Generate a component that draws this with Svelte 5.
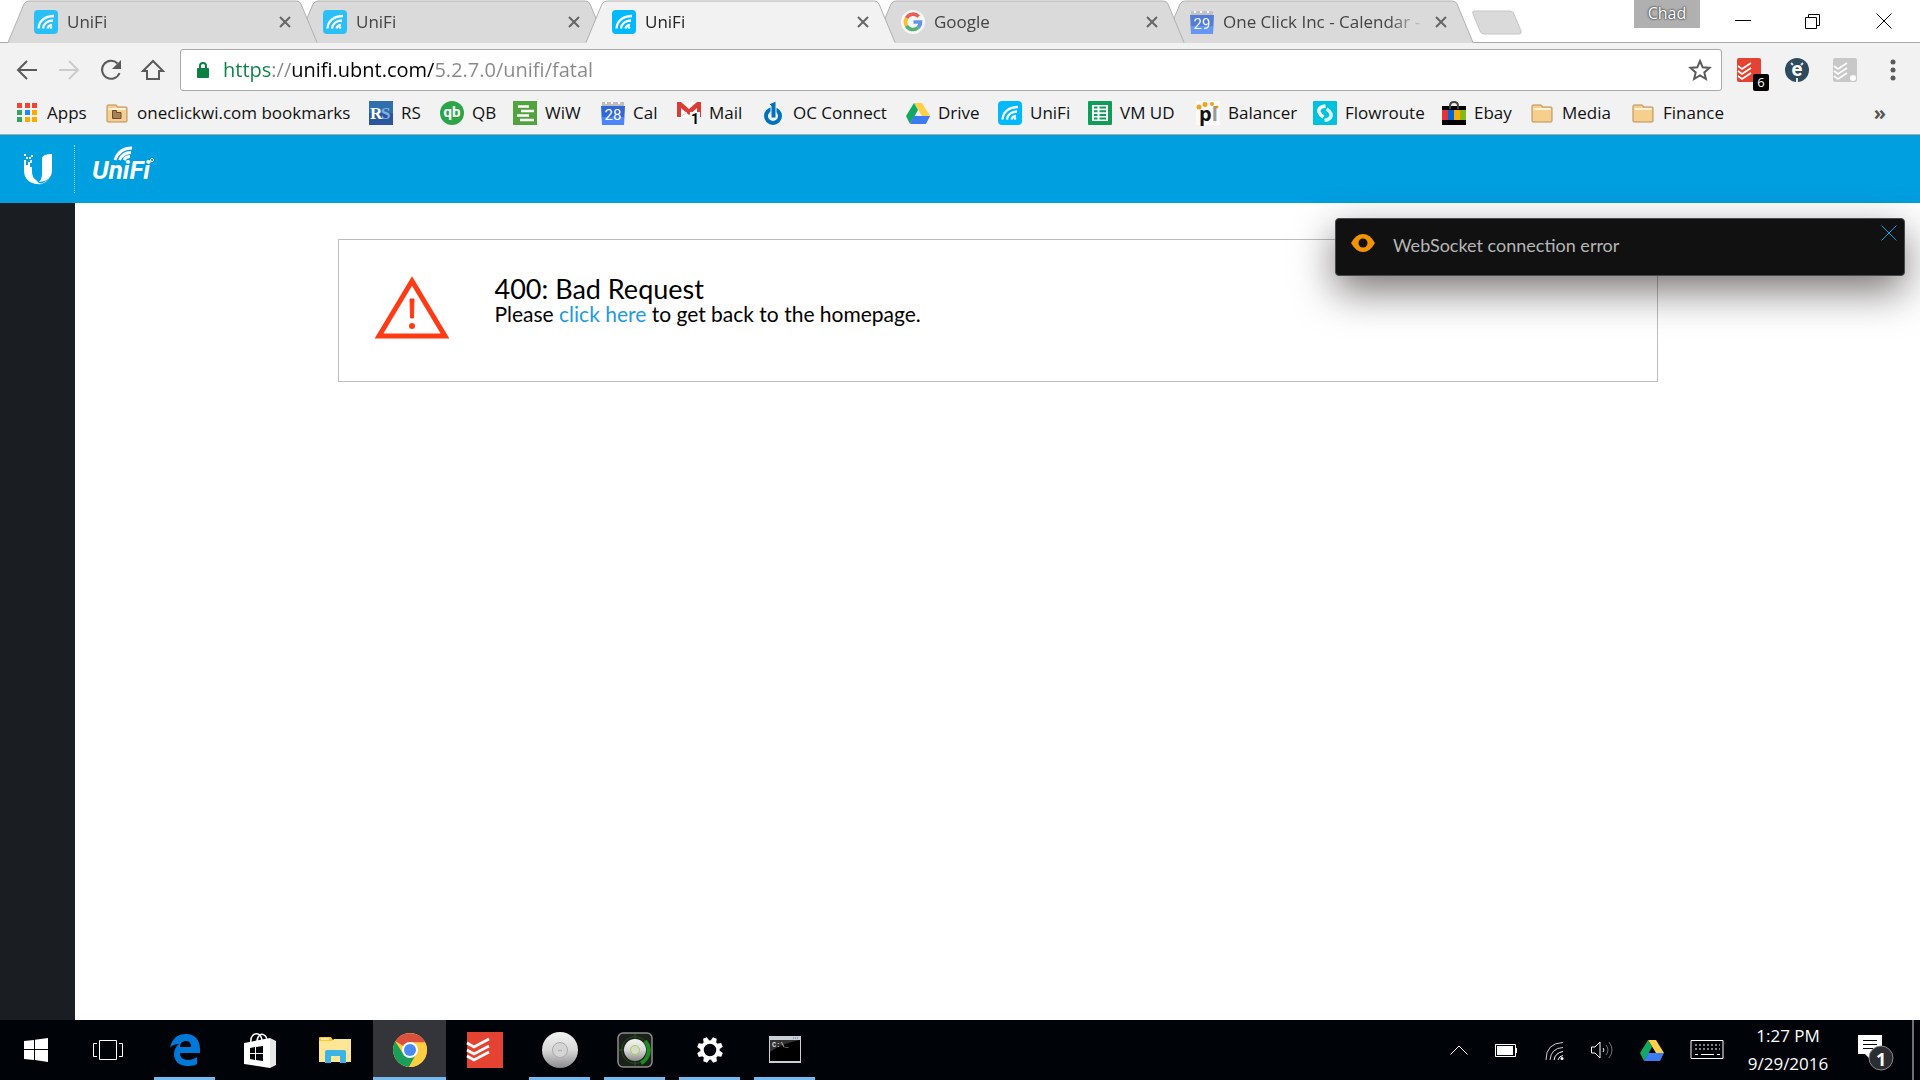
<script>
  const tabs = [
    { title: "UniFi", icon: "unifi" },
    { title: "UniFi", icon: "unifi" },
    { title: "UniFi", icon: "unifi", active: true },
    { title: "Google", icon: "google" },
    { title: "One Click Inc - Calendar -", icon: "cal29" },
  ]

  // width is the room each entry takes on the bar
  const bookmarks = [
    { name: "Apps", icon: "apps", width: 90 },
    { name: "oneclickwi.com bookmarks", icon: "folderorg", width: 264 },
    { name: "RS", icon: "rs", width: 71 },
    { name: "QB", icon: "qb", width: 73 },
    { name: "WiW", icon: "wiw", width: 88 },
    { name: "Cal", icon: "cal28", width: 76 },
    { name: "Mail", icon: "mail", width: 84 },
    { name: "OC Connect", icon: "power", width: 145 },
    { name: "Drive", icon: "drive", width: 92 },
    { name: "UniFi", icon: "unifi", width: 90 },
    { name: "VM UD", icon: "sheets", width: 108 },
    { name: "Balancer", icon: "pl", width: 117 },
    { name: "Flowroute", icon: "flow", width: 129 },
    { name: "Ebay", icon: "ebay", width: 88 },
    { name: "Media", icon: "folder", width: 101 },
    { name: "Finance", icon: "folder", width: 101 },
  ]

  const apps = [
    { name: "Edge", icon: "edge", open: true },
    { name: "Store", icon: "store" },
    { name: "File Explorer", icon: "explorer" },
    { name: "Chrome", icon: "chrome", open: true, focused: true },
    { name: "Todoist", icon: "todoist" },
    { name: "UniFi Controller", icon: "ap", open: true },
    { name: "UniFi Discovery", icon: "discover", open: true },
    { name: "Settings", icon: "settings", open: true },
    { name: "Command Prompt", icon: "cmd", open: true },
  ]

  const gearTeeth = [22, 67, 112, 157, 202, 247, 292, 337]

  let url = $state("https://unifi.ubnt.com/5.2.7.0/unifi/fatal")
  let showToast = $state(true)
</script>

{#snippet favicon(name)}
  <svg class="favicon" viewBox="0 0 24 24" aria-hidden="true">
    {#if name == "unifi"}
      <rect width="24" height="24" rx="4" fill="#00b9ff" />
      <g fill="none" stroke="#fff" stroke-width="2.3">
        <path d="M4.5 18.5C5 11 11 6 20 6" />
        <path d="M9 18.500C9.500 14 13 10.500 19 10.500" />
        <path d="M13.500 18.500C14 16.500 15.500 15 18 14.800" />
      </g>
      <circle cx="17" cy="17.500" r="1.300" fill="#fff" />
    {:else if name == "google"}
      <circle cx="12" cy="12" r="12" fill="#fff" />
      <g fill="none" stroke-width="3.600">
        <path d="M17.700 6.600A7.500 7.500 0 0 0 5.500 8.200" stroke="#ea4335" />
        <path d="M5.500 8.200A7.500 7.500 0 0 0 5.500 15.800" stroke="#fbbc05" />
        <path d="M5.500 15.800A7.500 7.500 0 0 0 17 17.600" stroke="#34a853" />
        <path d="M17 17.600A7.500 7.500 0 0 0 19.500 12H12.500" stroke="#4285f4" />
      </g>
    {:else if name == "cal28" || name == "cal29"}
      <path d="M1 1h22v6H1z" fill="#bdbdbd" />
      <path d="M4 2h2M10 2h2M17 2h2" stroke="#fff" stroke-width="2" />
      <path d="M0 5h24l-1 19H1z" fill="#3367d6" />
      <path d="M1 16h22v8H1z" fill="#4a86f7" />
      <text x="12" y="19" class="daynum">{name == "cal28" ? "28" : "29"}</text>
    {:else if name == "apps"}
      {#each [2, 9, 16] as y, row}
        {#each [2, 10, 17] as x, col}
          <rect {x} {y} width="5" height="5" fill={row == 0 ? "#f44336" : col == 0 ? "#34a262" : col == 1 && row == 1 ? "#1e88ff" : "#f9ab00"} />
        {/each}
      {/each}
    {:else if name == "folder" || name == "folderorg"}
      <path d="M2 20V5q0-1 1-1h8q1 0 1 1v1h9q1 0 1 1v13q0 1-1 1H3q-1 0-1-1z" fill="#f6cf8f" stroke="#b98d55" />
      <path d="M3.500 8h17" stroke="#fff2d6" stroke-width="2" />
      {#if name == "folderorg"}
        <path d="M7.500 9.500h4v2h4.500v6H7.500z" fill="#a57f58" stroke="#6e4c2e" />
      {/if}
    {:else if name == "rs"}
      <rect width="24" height="24" fill="#2f6fae" />
      <path d="M0 12h24v12H0z" fill="#2b55a0" />
      <text x="1" y="18" class="rs">R</text>
      <text x="12" y="18" class="rs dim">S</text>
    {:else if name == "qb"}
      <circle cx="12" cy="12" r="12" fill="#2ca548" />
      <text x="12" y="16" class="qb">qb</text>
    {:else if name == "wiw"}
      <rect width="24" height="24" fill="#51a33d" />
      <path d="M5 5.500h11M8 10h13M4 14.500h12M7 19h14" stroke="#fff" stroke-width="2.400" />
    {:else if name == "mail"}
      <path d="M0 1h24v16H0z" fill="#fff" />
      <path d="M0 1h4l8 7 8-7h4v15h-4V7l-8 7-8-7v9H0z" fill="#dc3c36" />
      <path d="M5 15l5-4M19 15l-5-4" stroke="#ecc" />
      <path d="M13 11h10v13H13z" fill="#f4f4f4" />
      <text x="18" y="23" class="mailcount">1</text>
    {:else if name == "power"}
      <circle cx="12" cy="15" r="7" fill="none" stroke="#0072bc" stroke-width="4" />
      <path d="M8 3l7-3v17h-5V5z" fill="#0072bc" stroke="#f2f2f2" />
    {:else if name == "drive"}
      <path d="M8 2h8l8 13h-8z" fill="#ffcf48" />
      <path d="M8 2l4 7-8 14-4-8z" fill="#11a861" />
      <path d="M8 15h16l-4 8H4z" fill="#3c7cf0" />
    {:else if name == "sheets"}
      <rect width="24" height="24" rx="1" fill="#0f9d58" />
      <path d="M4 4h16v16H4z" fill="#fff" />
      <path d="M6 6.500h3.500M6 10.200h3.500M6 13.900h3.500M6 17.500h3.500M11.500 6.500H18M11.500 10.200H18M11.500 13.900H18M11.500 17.500H18" stroke="#0f9d58" stroke-width="2" />
    {:else if name == "pl"}
      <rect width="24" height="24" fill="#fafafa" />
      <g fill="#f5a11c">
        <circle cx="3" cy="6" r="2.500" /><circle cx="9" cy="3.500" r="2.500" />
        <circle cx="16" cy="3" r="2" /><circle cx="21" cy="6" r="1.500" />
      </g>
      <text x="3" y="20" class="pl">p<tspan fill="#999">l</tspan></text>
    {:else if name == "flow"}
      <rect width="24" height="24" rx="1" fill="#00c1de" />
      <path d="M12.500 5C8 5.500 5 7.500 6 11q1 3 4.500 5" fill="none" stroke="#fff" stroke-width="3.500" />
      <path d="M11.500 19.500c4-.5 7.500-3 6.500-6.500q-1-3-4.500-5" fill="none" stroke="#d8f6fb" stroke-width="3.500" />
    {:else if name == "ebay"}
      <path d="M0 5h24v19H0z" fill="#000" />
      <path d="M0 9h6v10H0z" fill="#e53238" /><path d="M6 9h6v10H6z" fill="#0064d2" />
      <path d="M12 9h6v10h-6z" fill="#f5af02" /><path d="M18 9h6v10h-6z" fill="#86b817" />
      <path d="M8 8V5q0-4 4-4t4 4v3" fill="none" stroke="#444" stroke-width="2" />
    {/if}
  </svg>
{/snippet}

{#snippet appicon(name)}
  <svg class="appicon" viewBox="0 0 36 36" aria-hidden="true">
    {#if name == "edge"}
      <path fill="#0078d7" d="M3 16C5 6 11 2 19 2c10 0 14 7 14 15v4H13c0 5 4 7 8 7 3 0 6-1 9-3v7c-3 2-7 2-10 2-8 0-13-5-13-12 0-4 2-8 5-10-4 0-7 1-9 4zm10-1h11c0-4-2-6-5-6s-6 2-6 6z" />
    {:else if name == "store"}
      <path d="M9 11C8 4 12 1 16 2c3 1 4 5 4 8M15 10c0-6 4-9 7-7 3 1 3 4 3 7" fill="none" stroke="#fff" stroke-width="1.500" />
      <path d="M2 11l26-5v30L2 32z" fill="#fff" /><path d="M28 6l6 3v24l-6 3z" fill="#e6e6e6" />
      <path d="M8 16l5-1v6H8zM14 15l7-1v7h-7zM8 22h5v6l-5-1zM14 22h7v7l-7-1z" fill="#000308" />
    {:else if name == "explorer"}
      <path d="M2 6q0-1 1-1h11l2 3v4H2z" fill="#ffc72e" />
      <path d="M2 9h13l2-2h17v23H2z" fill="#ffe596" />
      <path d="M4 7h8" stroke="#fff3cc" stroke-width="1.500" />
      <path d="M8 31V20q0-2 2-2h17q2 0 2 2v11h-6v-7h-9v7z" fill="#3bb3e4" />
    {:else if name == "chrome"}
      <circle cx="18" cy="18" r="17" fill="#ffcd40" />
      <path d="M18 18L3.500 9.300A17 17 0 0 1 33.200 10.500H18z" fill="#db4f3f" />
      <path d="M3.300 9.500A17 17 0 0 0 17 35l7.500-13L18 18 10 20z" fill="#1a9f5a" />
      <path d="M17 35A17 17 0 0 0 33.200 10.500H18L24.500 22z" fill="#ffcd40" />
      <circle cx="18" cy="18" r="8" fill="#fff" /><circle cx="18" cy="18" r="6" fill="#4a8af4" />
    {:else if name == "todoist"}
      <rect width="36" height="36" fill="#e44332" />
      <path d="M0 11l7 4 15-8M0 18l7 4 15-8M0 24l7 4 15-8" fill="none" stroke="#fff" stroke-width="2.600" />
    {:else if name == "ap"}
      <circle cx="18" cy="18" r="18" fill="url(#apgrad)" />
      <circle cx="18" cy="18" r="7.500" fill="#d5d5d5" stroke="#aaa" />
      <path d="M16 19q2-2 4 0" stroke="#aaa" fill="none" />
    {:else if name == "discover"}
      <rect x="1" y="1" width="34" height="34" rx="5" fill="#1b201b" stroke="#8c8c8c" stroke-width="1.500" />
      <path d="M18 2v32M2 18h32" stroke="#2d5b22" />
      <circle cx="18" cy="18" r="13.500" fill="none" stroke="#244c1d" />
      <path d="M28 9a14 14 0 0 1-4 22" fill="none" stroke="#1f8a20" stroke-width="4" />
      <circle cx="18" cy="18" r="11" fill="url(#apgrad)" />
      <circle cx="18" cy="18" r="4.500" fill="#d6dbcb" stroke="#a9cf54" />
    {:else if name == "settings"}
      <g fill="#fff">
        {#each gearTeeth as angle}
          <path d="M15 9l1-4h4l1 4z" transform="rotate({angle} 18 18)" />
        {/each}
      </g>
      <circle cx="18" cy="18" r="8" fill="none" stroke="#fff" stroke-width="3.500" />
    {:else if name == "cmd"}
      <rect x="2" y="4" width="32" height="27" fill="#c9cfd6" />
      <rect x="3" y="8" width="30" height="21" fill="#000" />
      <path d="M3 8h30C18 11 10 15 3 20z" fill="#333" />
      <path d="M26 6h6" stroke="#456fae" stroke-dasharray="1 1" />
      <text x="5" y="15" class="prompt">C:\_</text>
    {/if}
  </svg>
{/snippet}

{#snippet todoist(color, dot)}
  <svg class="favicon" viewBox="0 0 24 24" aria-hidden="true">
    <rect width="24" height="24" rx="2" fill={color} />
    <path d="M1 8l4 3 9-6M1 13l4 3 9-6M1 18l4 3 9-6" fill="none" stroke="#fff" stroke-width="1.700" />
    {#if dot}<circle cx="20" cy="20" r="3" fill="#fff" />{/if}
  </svg>
{/snippet}

<svg class="defs" aria-hidden="true">
  <linearGradient id="apgrad" x1="0" y1="0" x2="0" y2="1">
    <stop offset="0" stop-color="#f2f2f2" /><stop offset="0.5" stop-color="#d9d9d9" /><stop offset="1" stop-color="#8b8b8b" />
  </linearGradient>
</svg>

<div class="screen">
  <header class="browser">
    <div class="tabstrip">
      {#each tabs as tab, i}
        <div class="tab" class:active={tab.active} style:z-index={tab.active ? 10 : 8 - i}>
          <svg class="tabshape" viewBox="0 0 309 43" preserveAspectRatio="none" aria-hidden="true">
            <path d="M0 43L16 4q2-3 5-3h267q4 0 5 3l16 39z" />
            <path class="edge" d="M0 42.500L16 4q2-3 5-3h267q4 0 5 3l16 38.500" />
          </svg>
          {@render favicon(tab.icon)}
          <button class="title">{tab.title}</button>
          <button class="x" aria-label="Close tab">
            <svg width="12" height="12" viewBox="0 0 12 12"><path d="M1 1l10 10M11 1L1 11" /></svg>
          </button>
        </div>
      {/each}
      <button class="newtab" aria-label="New tab">
        <svg width="52" height="25" viewBox="0 0 52 25"><path d="M3 1h36q3 0 4 3l7 17q1 3-2 3H13q-3 0-4-3L2 4q-1-3 1-3z" fill="#dadada" stroke="#c6c6c6" /></svg>
      </button>
      <button class="profile">Chad</button>
      <div class="winbuttons">
        <button aria-label="Minimize"><svg width="16" height="16" viewBox="0 0 16 16"><path d="M0 7.500h16" /></svg></button>
        <button aria-label="Restore"><svg width="16" height="16" viewBox="0 0 16 16"><path d="M.5 4.500h11v11H.5zM3.500 4V1.500h11v11H12" /></svg></button>
        <button aria-label="Close"><svg width="16" height="16" viewBox="0 0 16 16"><path d="M.5.500l15 15M15.500.500l-15 15" /></svg></button>
      </div>
    </div>

    <div class="toolbar">
      <button aria-label="Back"><svg width="24" height="24" viewBox="0 0 24 24"><path d="M22 12H3M12 3l-9 9 9 9" /></svg></button>
      <button aria-label="Forward" disabled><svg width="24" height="24" viewBox="0 0 24 24"><path d="M2 12h19M12 3l9 9-9 9" /></svg></button>
      <button aria-label="Reload"><svg width="24" height="24" viewBox="0 0 24 24"><path d="M20.500 15A9 9 0 1 1 18.500 5.500" /><path class="solid" d="M22 2v9h-9z" /></svg></button>
      <button aria-label="Home"><svg width="24" height="24" viewBox="0 0 24 24"><path d="M2 13L12 3l10 10h-4v8H6v-8z" /></svg></button>
      <div class="omnibox">
        <svg class="lock" width="14" height="18" viewBox="0 0 14 18" aria-hidden="true">
          <rect x="1" y="7" width="12" height="10" rx="1" fill="#0b8043" />
          <path d="M4 8V5q0-3 3-3t3 3v3" fill="none" stroke="#0b8043" stroke-width="2" />
        </svg>
        <input type="text" aria-label="Address" bind:value={url} spellcheck="false" />
        <button class="star" aria-label="Bookmark this page">
          <svg width="24" height="24" viewBox="0 0 24 24"><path d="M12 3l2.700 6.300 6.800.600-5.200 4.500 1.600 6.600-5.900-3.500L6.100 21l1.600-6.600L2.500 9.900l6.800-.600z" /></svg>
        </button>
      </div>
      <div class="extensions">
        <button class="ext" aria-label="Todoist">{@render todoist("#e44332", false)}<span class="count">6</span></button>
        <button class="ext" aria-label="Extension">
          <svg class="favicon" viewBox="0 0 24 24">
            <circle cx="12" cy="12" r="12" fill="#2d4a5e" />
            <path d="M6 5l2 2M18 5l-2 2M12 20v4" stroke="#dfe6ea" stroke-width="2" />
            <text x="12" y="18" class="ext-e">e</text>
          </svg>
        </button>
        <button class="ext" aria-label="Add to Todoist">{@render todoist("#c8c8c8", true)}</button>
        <button class="ext" aria-label="Menu">
          <svg class="favicon" viewBox="0 0 24 24" fill="#5a5a5a"><circle cx="12" cy="4" r="2.500" /><circle cx="12" cy="12" r="2.500" /><circle cx="12" cy="20" r="2.500" /></svg>
        </button>
      </div>
    </div>

    <nav class="bookmarks">
      {#each bookmarks as mark}
        <a href="#{mark.icon}" style:width="{mark.width}px">{@render favicon(mark.icon)}{mark.name}</a>
      {/each}
      <button class="more" aria-label="More bookmarks">»</button>
    </nav>
  </header>

  <div class="brand">
    <a class="ubnt" href="#home" aria-label="Ubiquiti">
      <svg width="32" height="34" viewBox="0 0 32 34">
        <path fill="#fff" d="M2 8h2v5h2v-3h2v5h2v5q0 5 4 8 2 3 6 4-12 1-16-6-2-3-2-7zM20 6q1-4 10-4v16q0 11-13 12 3-3 3-8z" />
        <path fill="#fff" d="M2 2h2v2H2zM7 5h2v2H7zM9 3h2v2H9zM4 5h2v2H4zM8 8h2v3H8z" />
        <path fill="#fff" d="M29 23q-4 9-12 9 9-2 12-9z" />
      </svg>
    </a>
    <a class="unifi" href="#unifi" aria-label="UniFi">
      <svg width="66" height="40" viewBox="0 0 66 40">
        <text x="0" y="34" class="wordmark">UniFi</text>
        <path d="M23 15Q27 3 40 3M27.500 15Q31 7.500 39 7.500M32 15Q34 11.500 38 11.500" fill="none" stroke="#fff" stroke-width="2.800" />
        <circle cx="60" cy="15" r="1.500" fill="none" stroke="#fff" />
      </svg>
    </a>
  </div>

  <div class="body">
    <aside></aside>
    <main>
      <section class="card">
        <svg width="76" height="64" viewBox="0 0 76 64" aria-hidden="true">
          <path d="M37 5L70 60H4z" fill="none" stroke="#ff3b16" stroke-width="5" />
          <path d="M35 23h4l-.500 19h-3z" fill="#ff3b16" stroke="#ff3b16" /><circle cx="37" cy="50" r="3" fill="#ff3b16" />
        </svg>
        <div>
          <h1>400: Bad Request</h1>
          <p>Please <a href="#home">click here</a> to get back to the homepage.</p>
        </div>
      </section>
      {#if showToast}
        <div class="toast" role="alert">
          <svg width="24" height="18" viewBox="0 0 24 18" aria-hidden="true">
            <path d="M0 9Q5 0 12 0t12 9q-5 9-12 9T0 9z" fill="#f29400" /><circle cx="12" cy="9" r="4.500" fill="#111" />
          </svg>
          <span>WebSocket connection error</span>
          <button aria-label="Dismiss" onclick={() => (showToast = false)}>
            <svg width="16" height="16" viewBox="0 0 16 16"><path d="M.5.500l15 15M15.500.500l-15 15" /></svg>
          </button>
        </div>
      {/if}
    </main>
  </div>

  <footer class="taskbar">
    <button class="start" aria-label="Start">
      <svg width="24" height="24" viewBox="0 0 24 24" fill="#fff"><path d="M0 3l10-1v9H0zM11 1.800L24 0v11H11zM0 12h10v10L0 21zM11 12h13v12l-13-2z" /></svg>
    </button>
    <button class="taskview" aria-label="Task View">
      <svg width="30" height="20" viewBox="0 0 30 20"><path d="M6.500.500h17v19h-17zM4 3.500H.5v13H4M26 3.500h3.500v13H26" fill="none" stroke="#fff" /></svg>
    </button>
    {#each apps as app}
      <button class="app" class:open={app.open} class:focused={app.focused} aria-label={app.name}>{@render appicon(app.icon)}</button>
    {/each}
    <div class="tray">
      <svg width="18" height="24" viewBox="0 0 18 24"><path d="M.5 16.500L9 8l8.500 8.500" /></svg>
      <svg width="24" height="24" viewBox="0 0 24 24"><path d="M1.500 6.500h20v12h-20zM22.500 10v5" /><path class="solid" d="M3 8h16v9H3z" /></svg>
      <svg width="20" height="24" viewBox="0 0 20 24"><path d="M2 22Q2 5 19 4.500M6 22Q7 10 19 9.500" opacity=".8" /><path d="M10 22q1-7 9-8.500M14 22q1-4 5-4.500" /><circle class="solid" cx="18" cy="20.500" r="1.500" /></svg>
      <svg width="24" height="24" viewBox="0 0 24 24"><path d="M1.500 9v6H5l5 5V4L5 9zM13 10q2 2 0 4" /><path d="M16 7q4 5 0 10M19 4q6 8 0 16" opacity=".45" /></svg>
      {@render favicon("drive")}
      <svg width="34" height="24" viewBox="0 0 34 24"><path d="M1 2.500h32v18H1z" /><path d="M5 7h25M5 11h25" stroke-dasharray="2 2" /><path d="M5 16.500h3M11 16.500h13M27 16.500h3" /></svg>
      <time>1:27 PM<br />9/29/2016</time>
      <button class="action" aria-label="Action center">
        <svg width="40" height="38" viewBox="0 0 40 38">
          <path d="M2 2h24v19H14v5l-5-5H2z" fill="#fff" />
          <path d="M7 7.500h14M7 11.500h14M7 15.500h10" stroke="#000308" />
          <circle cx="25" cy="25" r="12" fill="#2b2d30" stroke="#86888a" />
        </svg>
        <span>1</span>
      </button>
    </div>
  </footer>
</div>

<style>
  :global(body) {
    margin: 0;
  }

  .screen {
    display: flex;
    flex-direction: column;
    min-height: 100vh;
    font-family: "Open Sans", "Noto Sans", sans-serif;
    font-size: 17px;
    color: #000;
  }

  .defs {
    position: absolute;
    width: 0;
    height: 0;
  }

  button {
    padding: 0;
    border: 0;
    background: none;
    font: inherit;
    color: inherit;
  }

  svg {
    display: block;
    flex: none;
    overflow: visible;
  }

  .favicon {
    width: 24px;
    height: 24px;
  }

  .daynum, .qb, .mailcount, .ext-e {
    font: 15px Roboto, sans-serif;
    fill: #fff;
    text-anchor: middle;
  }
  .qb { font-weight: bold; }
  .mailcount { font-size: 14px; font-weight: bold; fill: #000; }
  .ext-e { font-size: 20px; font-weight: bold; }
  .rs { font: bold 17px "Liberation Serif", serif; fill: #fff; }
  .dim { fill: #7fb4e0; }
  .pl { font: bold 20px "Open Sans", sans-serif; fill: #111; }
  .prompt { font: bold 7px "Liberation Mono", monospace; fill: #ddd; }

  /* browser */

  .browser {
    background: #f2f2f2;
    border-bottom: 1px solid #a8a8a8;
  }

  .tabstrip {
    display: flex;
    height: 43px;
    padding-left: 8px;
    background: linear-gradient(#aaa, #aaa) bottom / 100% 1px no-repeat #fff;
  }

  .tab {
    position: relative;
    display: flex;
    align-items: center;
    gap: 9px;
    flex: 0 1 309px;
    box-sizing: border-box;
    min-width: 0;
    margin-right: -20px;
    padding: 0 26px;
    color: #444;
  }

  .tab.active {
    color: #222;
  }

  .tab .favicon {
    opacity: 0.8;
  }
  .tab.active .favicon {
    opacity: 1;
  }

  .tab > :global(*) {
    position: relative;
  }

  .tab > .tabshape {
    position: absolute;
    inset: 0;
    width: 100%;
    height: 100%;
    fill: #dadada;
  }
  .tab.active > .tabshape {
    fill: #f2f2f2;
  }

  .edge {
    fill: none;
    stroke: #b0b0b0;
  }

  .title {
    flex: 1;
    min-width: 0;
    overflow: hidden;
    white-space: nowrap;
    text-align: left;
    mask-image: linear-gradient(90deg, #000 165px, transparent 202px);
  }

  .x svg {
    fill: none;
    stroke: #666;
    stroke-width: 2;
  }

  .newtab {
    align-self: flex-start;
    margin: 10px auto 0 18px;
  }

  .profile {
    align-self: flex-start;
    width: 66px;
    height: 28px;
    padding-bottom: 2px;
    background: #b0b0b0;
    color: #fff;
    font-size: 16px;
    text-shadow: 0 0 2px #333, 0 0 2px #333;
  }

  .winbuttons {
    display: flex;
    align-self: flex-start;
  }

  .winbuttons button {
    display: flex;
    justify-content: center;
    align-items: center;
    width: 70px;
    height: 41px;
  }
  .winbuttons button:first-child {
    width: 78px;
    padding-left: 8px;
  }
  .winbuttons button:last-child {
    width: 72px;
  }

  .winbuttons svg {
    fill: none;
    stroke: #000;
  }

  .toolbar {
    display: flex;
    align-items: center;
    gap: 18px;
    padding: 6px 15px 0;
  }

  .toolbar > button svg, .star svg {
    fill: none;
    stroke: #5a5a5a;
    stroke-width: 2;
  }
  .toolbar > button:disabled svg {
    stroke: #ccc;
  }
  .toolbar .solid {
    fill: #5a5a5a;
    stroke: none;
  }

  .omnibox {
    display: flex;
    align-items: center;
    flex: 1;
    box-sizing: border-box;
    height: 42px;
    margin: 0 -3px;
    padding: 0 9px 0 15px;
    border: 1px solid #a9a9a9;
    border-radius: 3px;
    background: #fff;
  }

  .omnibox input {
    flex: 1;
    min-width: 0;
    margin-left: 13px;
    padding: 0;
    border: 0;
    outline: 0;
    font: inherit;
    font-size: 20px;
    line-height: 32px;
    /* scheme, separator, host and path each get their colour */
    color: transparent;
    caret-color: #000;
    background: linear-gradient(90deg, #0b8043 50px, #888 50px 69px, #000 69px 211px, #888 211px);
    background-clip: text;
  }

  .extensions {
    display: flex;
    gap: 24px;
  }

  .ext {
    position: relative;
  }

  .count {
    position: absolute;
    left: 16px;
    top: 16px;
    width: 16px;
    height: 17px;
    border-radius: 2px;
    background: #000;
    color: #fff;
    font-size: 13px;
    line-height: 17px;
  }

  .bookmarks {
    display: flex;
    align-items: center;
    height: 43px;
    padding: 0 34px 0 15px;
    white-space: nowrap;
  }

  .bookmarks a {
    display: flex;
    align-items: center;
    gap: 8px;
    color: #111;
    text-decoration: none;
  }

  .more {
    margin-left: auto;
    color: #555;
    font-size: 20px;
    font-weight: bold;
  }

  /* unifi page */

  .brand {
    display: flex;
    align-items: center;
    height: 68px;
    background: #009fe0;
  }

  .ubnt {
    display: flex;
    justify-content: center;
    align-items: center;
    box-sizing: border-box;
    width: 75px;
    height: 48px;
    padding-left: 2px;
    border-right: 1px dotted #8fd4f2;
  }

  .unifi {
    margin: -8px 0 0 17px;
  }

  .wordmark {
    font: italic bold 26px Roboto, sans-serif;
    fill: #fff;
  }

  .body {
    display: flex;
    flex: 1;
    font-family: Lato, sans-serif;
  }

  aside {
    width: 75px;
    background: #1a1d21;
  }

  main {
    position: relative;
    flex: 1;
    padding: 36px 24px;
    background: #fff;
  }

  .card {
    display: flex;
    gap: 44px;
    box-sizing: border-box;
    max-width: 1320px;
    margin: 0 auto;
    padding: 36px 36px 41px;
    border: 1px solid #bdbdbd;
  }

  h1, p {
    margin: 0;
    font-weight: normal;
  }

  h1 {
    font-size: 27px;
    line-height: 25px;
  }

  p {
    font-size: 21px;
    line-height: 26px;
  }

  p a {
    color: #1c9be0;
    text-decoration: none;
  }

  .toast {
    position: absolute;
    top: 15px;
    right: 15px;
    display: flex;
    align-items: flex-start;
    gap: 18px;
    box-sizing: border-box;
    width: 570px;
    padding: 15px 15px 18px;
    border: 1px solid #444a50;
    border-radius: 4px;
    background: #111;
    color: #b5b7b9;
    font-size: 18px;
    line-height: 23px;
    box-shadow: 0 15px 40px rgba(15, 0, 0, 0.55);
  }

  .toast button {
    position: absolute;
    top: 6px;
    right: 7px;
  }

  .toast button svg {
    stroke: #009fe0;
  }

  /* taskbar */

  .taskbar {
    display: flex;
    height: 60px;
    background: #000308;
    color: #fff;
  }

  .taskbar button {
    display: flex;
    justify-content: center;
    align-items: center;
  }

  .start {
    width: 72px;
  }

  .taskview {
    width: 72px;
    margin-right: 3px;
  }

  .app {
    box-sizing: border-box;
    width: 61px;
    margin: 0 7px;
  }

  .taskbar .open {
    padding-top: 3px;
    border-bottom: 3px solid #76b9ed;
  }

  .taskbar .focused {
    width: 73px;
    margin: 0 1px;
    background: #34353a;
  }

  .appicon {
    width: 36px;
    height: 36px;
  }

  .tray {
    display: flex;
    align-items: center;
    gap: 26px;
    margin-left: auto;
    padding-right: 6px;
  }

  .tray > svg:not(.favicon) {
    fill: none;
    stroke: #fff;
  }
  .tray .solid {
    fill: #fff;
    stroke: none;
  }

  time {
    width: 86px;
    margin: 0 -1px 0 -5px;
    text-align: center;
    font-size: 17px;
    line-height: 28px;
  }

  .taskbar .action {
    position: relative;
    height: 60px;
    padding: 4px 16px 0 0;
    border-right: 2px solid #6d6f72;
  }

  .action span {
    position: absolute;
    left: 20px;
    top: 24px;
    font-size: 18px;
    font-weight: bold;
    line-height: 30px;
  }
</style>
